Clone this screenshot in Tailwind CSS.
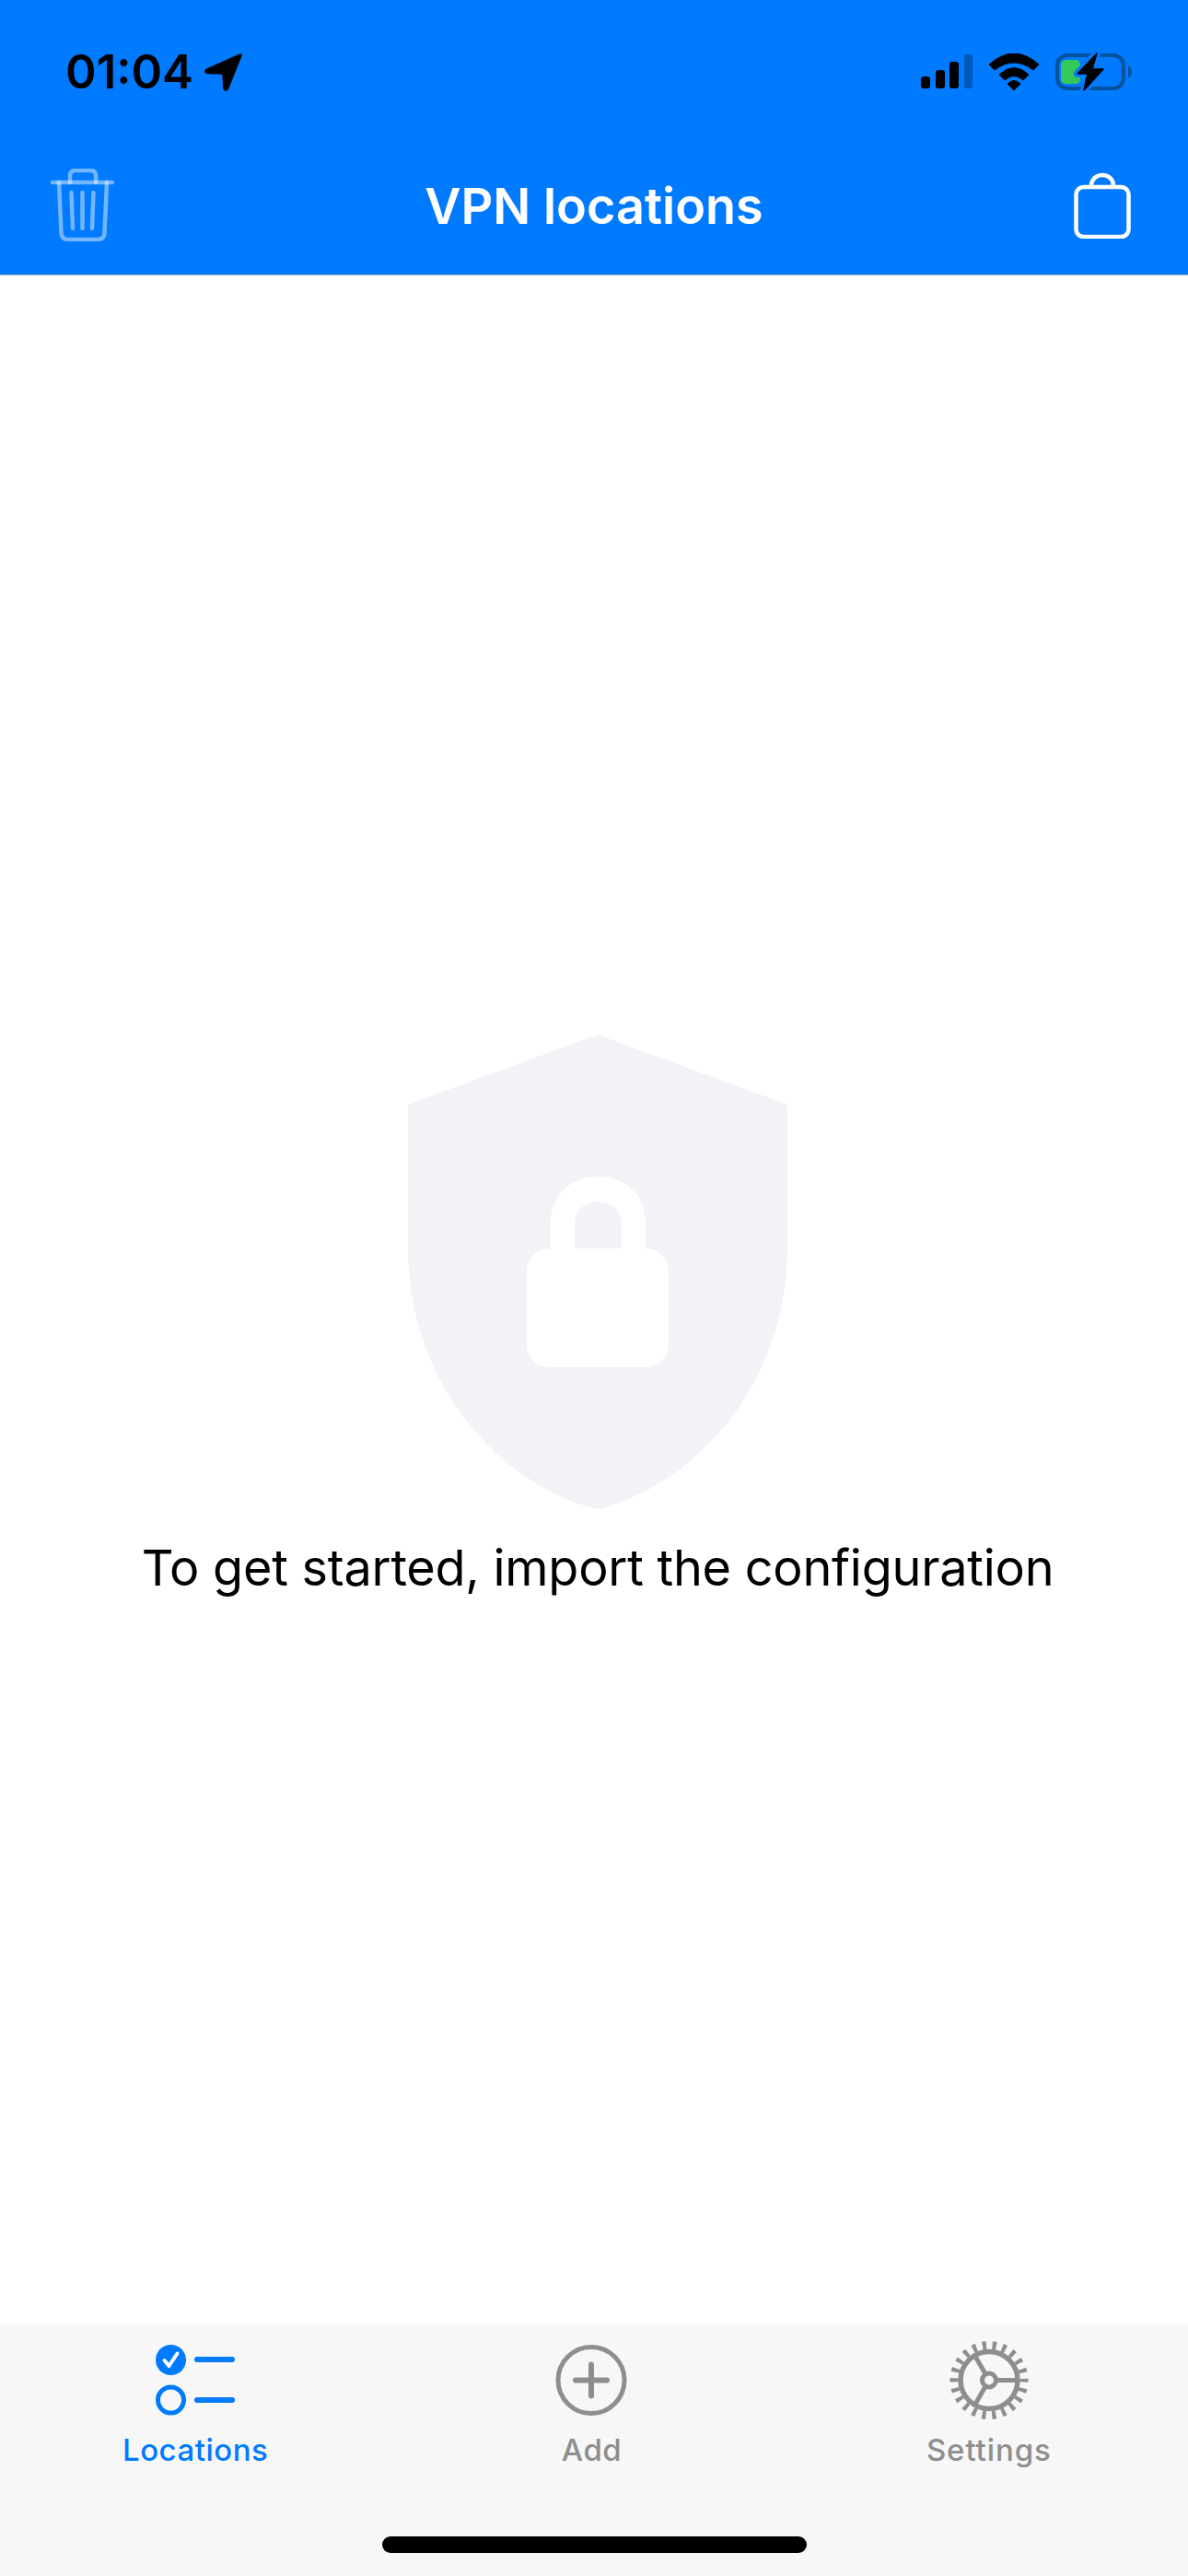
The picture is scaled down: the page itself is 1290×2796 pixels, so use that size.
<!DOCTYPE html>
<html lang="en">
<head>
  <meta charset="UTF-8" />
  <title>VPN locations</title>
  <script src="https://cdn.jsdelivr.net/npm/@tailwindcss/browser@4"></script>
</head>
<body class="bg-white font-['Inter',sans-serif] text-black">
  <div class="flex flex-col w-[1290px] h-[2796px] overflow-hidden">

    <!-- status bar + nav -->
    <header class="bg-[#007AFF] h-[299px] border-b border-[#b4b4b4] shrink-0">
      <div class="flex justify-between items-center h-[41px] mt-0 pt-[57px] box-content pl-[71px] pr-[60px]">
        <div class="flex items-center gap-[12px]">
          <span class="text-[51px] leading-[41px] font-semibold">01:04</span>
          <svg width="42" height="42" viewBox="0 0 42 42" class="mt-[1px]">
            <path d="M39 3 L3 19 Q1 20.500 3 21.500 L19 22 Q21 22 21 24 L22 39 Q23 41 24.500 39 Z" fill="#000" stroke="#000" stroke-width="3.500" stroke-linejoin="round" />
          </svg>
        </div>
        <div class="flex items-center gap-[18px]">
          <svg width="56" height="37" viewBox="0 0 56 37">
            <rect x="0" y="24" width="10" height="13" rx="3" fill="#000" />
            <rect x="16" y="17" width="10" height="20" rx="3" fill="#000" />
            <rect x="31" y="8" width="10" height="29" rx="3" fill="#000" />
            <rect x="47" y="0" width="9" height="37" rx="3" fill="#0059BA" />
          </svg>
          <svg width="54" height="40" viewBox="0 0 54 40">
            <path d="M0 12 Q27 -12 54 12 L48 18 Q27 2 6 18 Z" fill="#000" stroke="#000" stroke-linejoin="round" />
            <path d="M11 23 Q27 8 43 23 L37 29 Q27 20 17 29 Z" fill="#000" stroke="#000" stroke-linejoin="round" />
            <path d="M20 33 Q27 26 34 33 L27 40 Z" fill="#000" stroke="#000" stroke-linejoin="round" />
          </svg>
          <svg width="84" height="42" viewBox="0 0 84 42">
            <rect x="2" y="3" width="72" height="36" rx="11" fill="none" stroke="#00529F" stroke-width="4" />
            <path d="M79 14 Q83 16 83 21 Q83 26 79 28 Z" fill="#00529F" />
            <rect x="6" y="8" width="21" height="26" rx="5" fill="#34C759" />
            <path d="M45 1 L24 23 L35 23 L31 41 L52 18 L40 18 Z" fill="none" stroke="#007AFF" stroke-width="8" stroke-linejoin="round" />
            <path d="M45 1 L24 23 L35 23 L31 41 L52 18 L40 18 Z" fill="#000" stroke="#000" stroke-width="1.500" stroke-linejoin="round" />
          </svg>
        </div>
      </div>
      <div class="flex items-center mt-[85px] pl-[55px] pr-[62px]">
        <svg width="69" height="79" viewBox="0 0 69 79" fill="none" stroke="#fff" stroke-opacity="0.45" stroke-width="4.500" stroke-linecap="round" stroke-linejoin="round" class="shrink-0">
          <path d="M2 15 H67" />
          <path d="M21 15 V8 Q21 2 27 2 H43 Q49 2 49 8 V15" />
          <path d="M9 15 L11.500 70 Q12 77 19 77 H51 Q58 77 58.500 70 L61 15" />
          <path d="M22.500 26 L24 65" />
          <path d="M34.500 26 V65" />
          <path d="M46.500 26 L45 65" />
        </svg>
        <h1 class="flex-1 text-center text-white text-[54px] h-[79px] leading-[81px] font-semibold">VPN locations</h1>
        <svg width="62" height="72" viewBox="0 0 62 72" fill="none" stroke="#fff" stroke-width="4.500" class="shrink-0">
          <rect x="2.500" y="16" width="57" height="54" rx="8" />
          <path d="M19 16 V15 C19 -1 43 -1 43 15 V16" />
        </svg>
      </div>
    </header>

    <!-- empty state -->
    <main class="flex-1 flex flex-col items-center pt-[824px] pl-[8px]">
      <svg width="412" height="517" viewBox="0 0 412 517" class="shrink-0">
        <path d="M206 0 L412 76 V232 C412 380 310 490 206 515 C102 490 0 380 0 232 V76 Z" fill="#F2F2F7" />
        <path fill-rule="evenodd" d="M155 232 V204 C155 137 258 137 258 204 V232 C271 232 283 242 283 256 V337 C283 351 271 361 258 361 H154 C140 361 129 351 129 337 V256 C129 242 141 232 155 232 Z M181 232 H232 V206 C232 173 181 173 181 206 Z" fill="#fff" />
      </svg>
      <p class="mt-[30px] text-[54px] leading-[64px] tracking-[-0.26px] whitespace-nowrap">To get started, import the configuration</p>
    </main>

    <!-- tab bar -->
    <footer class="bg-[#F7F7F7] h-[274px] shrink-0">
      <nav class="flex pt-[23px]">
        <a class="flex-1 flex flex-col items-center text-[#007AFF] pr-[6px]">
          <svg width="86" height="77" viewBox="0 0 86 77" class="h-[77px]">
            <circle cx="16.500" cy="16.500" r="16.500" fill="#007AFF" />
            <path d="M9.500 17 L14.500 23 L23.500 9.500" fill="none" stroke="#fff" stroke-width="4" stroke-linecap="round" stroke-linejoin="round" />
            <circle cx="16.500" cy="60" r="14" fill="none" stroke="#007AFF" stroke-width="5" />
            <path d="M45 16 H83 M45 60 H83" stroke="#007AFF" stroke-width="6" stroke-linecap="round" />
          </svg>
          <span class="mt-[17px] text-[33px] leading-[40px] tracking-[0.5px] font-medium">Locations</span>
        </a>
        <a class="flex-1 flex flex-col items-center text-[#8E8E8E] pr-[7px]">
          <svg width="78" height="77" viewBox="0 0 78 77" class="h-[77px]" fill="none" stroke="#8E8E8E">
            <circle cx="39" cy="38.500" r="36" stroke-width="5" />
            <path d="M22 38.500 H56 M39 21.500 V55.500" stroke-width="6" stroke-linecap="round" />
          </svg>
          <span class="mt-[17px] text-[33px] leading-[40px] tracking-[0.5px] font-medium">Add</span>
        </a>
        <a class="flex-1 flex flex-col items-center text-[#8E8E8E] pr-[4px]">
          <svg width="88" height="77" viewBox="0 5.500 88 77" class="h-[77px] overflow-visible" fill="none" stroke="#8E8E8E">
            <circle cx="44" cy="44" r="38" stroke-width="9" stroke-dasharray="4.200 6.653" stroke-dashoffset="2.100" />
            <circle cx="44" cy="44" r="31" stroke-width="5.500" />
            <circle cx="44" cy="44" r="7.500" stroke-width="5" />
            <path d="M53 44 H75 M39.500 51.800 L28.500 70.850 M39.500 36.200 L28.500 17.150" stroke-width="5" />
          </svg>
          <span class="mt-[17px] text-[33px] leading-[40px] tracking-[0.9px] font-medium">Settings</span>
        </a>
      </nav>
      <div class="w-[461px] h-[18px] rounded-full bg-black mx-auto mt-[74px]"></div>
    </footer>
  </div>
</body>
</html>
